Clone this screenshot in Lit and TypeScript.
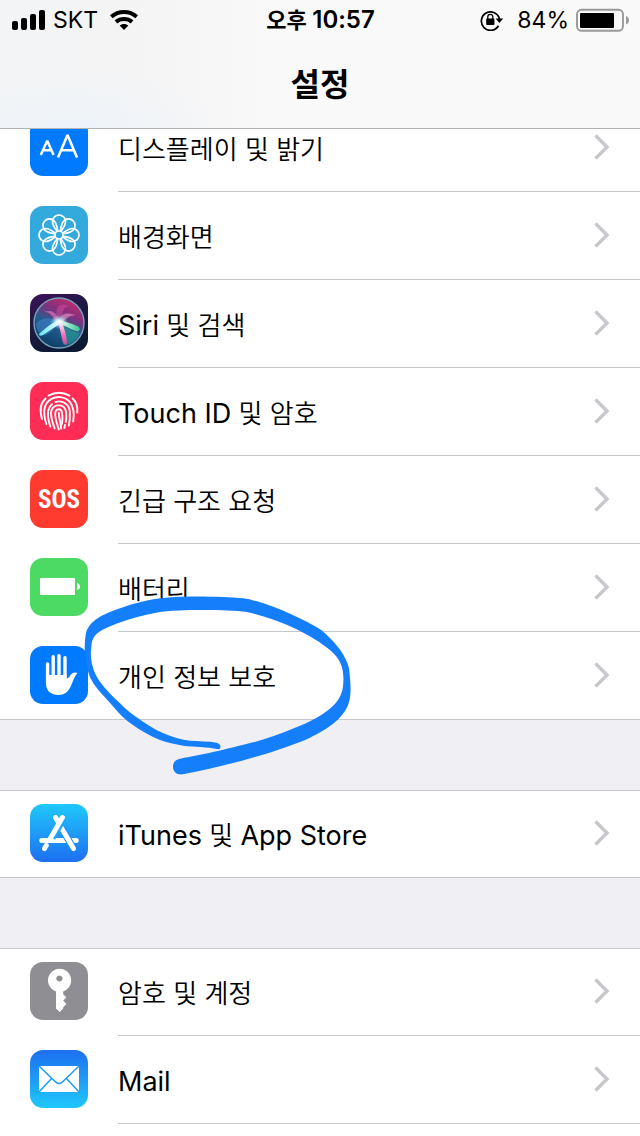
import { LitElement, html, svg, css } from "lit";
import { customElement } from "lit/decorators.js";

const petal = "M27 25 C23 20 22.5 17 22.5 15.5 A6.5 6.5 0 0 1 35.5 15.5 C35.5 17 35 20 31 25";

const icons: Record<string, unknown> = {
  display: svg`
    <rect width="58" height="58" fill="#007aff"/>
    <g fill="none" stroke="#fff" stroke-linejoin="bevel">
      <path stroke-width="2.5" d="M10.8 37 L17.2 22.8 L23.6 37 M13.3 32.2 H21.3"/>
      <path stroke-width="2.5" d="M28 39.5 L37.5 17 L47 39.5 M31.3 32.3 H43.7"/>
    </g>`,
  wallpaper: svg`
    <rect width="58" height="58" fill="#34aadc"/>
    <g fill="none" stroke="#fff" stroke-width="1.7">
      ${[0, 45, 90, 135, 180, 225, 270, 315].map(
        (a) => svg`<path d=${petal} transform="rotate(${a} 29 29)"/>`
      )}
      <circle cx="29" cy="29" r="4"/>
    </g>`,
  siri: svg`
    <defs>
      <linearGradient id="siri-bg" x1="0" y1="0" x2="0.4" y2="1">
        <stop offset="0" stop-color="#3d1159"/><stop offset="0.5" stop-color="#1c1a42"/><stop offset="1" stop-color="#0d1a35"/>
      </linearGradient>
      <linearGradient id="siri-orb" x1="0.75" y1="0" x2="0.3" y2="1">
        <stop offset="0" stop-color="#c52d6e"/><stop offset="0.3" stop-color="#84307e"/><stop offset="0.58" stop-color="#225e91"/><stop offset="1" stop-color="#0b3c63"/>
      </linearGradient>
      <radialGradient id="siri-core"><stop offset="0" stop-color="#fff"/><stop offset="0.4" stop-color="#d5fbff" stop-opacity="0.8"/><stop offset="1" stop-color="#75cfe8" stop-opacity="0"/></radialGradient>
      <linearGradient id="siri-left" x1="0" x2="1"><stop offset="0" stop-color="#5ae7f4"/><stop offset="1" stop-color="#fff"/></linearGradient>
      <linearGradient id="siri-right" x1="0" x2="1"><stop offset="0" stop-color="#fff"/><stop offset="1" stop-color="#2bc98e"/></linearGradient>
      <linearGradient id="siri-down" x1="0" y1="0" x2="0" y2="1"><stop offset="0" stop-color="#fff"/><stop offset="0.6" stop-color="#f171bc"/><stop offset="1" stop-color="#b7539d"/></linearGradient>
    </defs>
    <rect width="58" height="58" fill="url(#siri-bg)"/>
    <circle cx="29" cy="29" r="25" fill="url(#siri-orb)" stroke="#7aa0b8" stroke-width="1.4"/>
    <path fill="#4186cd" opacity="0.55" d="M29 28 C20 21 9 25 6 30 C8 43 16 47 29 28Z"/>
    <path fill="#23af94" opacity="0.5" d="M31 29 C39 36 47 39 50 39 C46 47 40 51 35 51Z"/>
    <path fill="#f070b4" opacity="0.65" d="M30 27 C25 16 20 16 14 18 C20 17 24 24 27 29Z"/>
    <path fill="#f49ac4" opacity="0.6" d="M29 27 C31 19 36 18 46 21 C40 21 35 25 32 29Z"/>
    <path fill="#d64da0" opacity="0.5" d="M27 26 C24 11 31 8 39 12 C33 13 33 18 31 27Z"/>
    <ellipse cx="29" cy="28" rx="9" ry="7" fill="url(#siri-core)"/>
    <path fill="url(#siri-left)" d="M30 26 C22 28 16 34 9 40 C9 42 11 42 13 41 C19 37 25 33 31 29Z"/>
    <path fill="url(#siri-right)" d="M29 26 C36 28 44 30 49 33 C51 36 49 38 46 37 C40 35 34 31 28 29Z"/>
    <path fill="url(#siri-down)" d="M28 27 C30 36 32 44 33 49 C35 52 37 51 37 48 C36 39 34 33 31 27Z"/>`,
  touchid: svg`
    <rect width="58" height="58" fill="#ff2d55"/>
    <g fill="none" stroke="#fff" stroke-width="1.9" stroke-linecap="round">
      <path d="M18.5 13.6 C25 10 33 10 39.5 13.6"/>
      <path d="M15.6 16.5 C10.5 21 9.4 28 12 37"/>
      <path d="M42.6 16.5 C46.4 20 47.8 25 47.3 30.5"/>
      <path d="M16.4 42 C12.4 30 14.4 21 21.4 16.9 C28 13.5 36 15 40 20.2 C43.6 25 44.4 32 43.2 39.5"/>
      <path d="M20.4 44.6 C16.8 34 17 26.5 22 22.2"/>
      <path d="M25.4 20 C33 17.6 39 22.5 39.8 29 C40.2 34.5 39.8 39.5 38.8 43.6"/>
      <path d="M24.6 46.4 C21.2 37 20.2 31.5 21.6 28 C24.4 21.6 33.4 22 35.6 28 C36.8 32 36.4 36.5 35.8 40"/>
      <path d="M35 43 L34.4 46"/>
      <path d="M28.8 47.4 C25.6 38 24.4 33.5 25.4 30 C26.8 26 31.4 26.6 32 30.5 C32.8 36 32.4 40 31.6 42.5"/>
      <path d="M28.8 31 C28.8 35 30.6 40 31.2 46.6"/>
    </g>`,
  sos: svg`
    <rect width="58" height="58" fill="#ff3b30"/>
    <text class="sos" x="29" y="38" text-anchor="middle">SOS</text>`,
  battery: svg`
    <rect width="58" height="58" fill="#4cd964"/>
    <rect x="10" y="20" width="35" height="17" rx="1" fill="#fff"/>
    <path fill="#fff" d="M47 25 C51 26 51 31 47 32Z"/>`,
  privacy: svg`
    <rect width="58" height="58" fill="#007aff"/>
    <g stroke="#fff" stroke-width="3.4" stroke-linecap="round">
      <path d="M17.6 18 V32 M23.2 10.8 V31 M29 9.6 V31 M35 11.6 V31"/>
    </g>
    <path fill="#fff" d="M15.9 29 H36.7 V32.5 Q38.5 32.5 39.5 30.5 C41.5 27 44.5 25.5 47.5 27 C44.5 30 43.5 34 41.8 38 C39 45 35.5 49 28.5 49 C20 49 15.9 44 15.9 37Z"/>`,
  store: svg`
    <defs><linearGradient id="store-bg" x1="0" y1="0" x2="0" y2="1"><stop offset="0" stop-color="#1fc8fb"/><stop offset="1" stop-color="#1e6ff1"/></linearGradient></defs>
    <rect width="58" height="58" fill="url(#store-bg)"/>
    <g fill="none" stroke="#fff" stroke-width="5" stroke-linecap="round">
      <path d="M16.3 41.5 L14.5 44.5"/>
      <path d="M11.8 36.5 H46.2"/>
      <path d="M31 23 L42.6 43" stroke="#1f8ff6" stroke-width="7" stroke-linecap="butt"/>
      <path d="M31.8 24.4 L43.5 44.6"/>
      <path d="M33.3 14.5 L22 34" stroke="#1fa6f8" stroke-width="7" stroke-linecap="butt"/>
      <path d="M25.6 13.5 L28.6 18.7"/>
      <path d="M32.4 13.5 L19.5 36"/>
    </g>`,
  key: svg`
    <rect width="58" height="58" fill="#8e8e93"/>
    <path fill="#fff" fill-rule="evenodd" d="M26 29.4 A11.6 11.6 0 1 1 33.2 29.4 V32.2 L36.4 35.5 L33.2 38.6 L36.4 42 L33.2 45.2 V46.5 L29.8 50 L26 46.5Z M29.4 13.4 a3.1 3.1 0 1 0 .01 0Z"/>`,
  mail: svg`
    <defs><linearGradient id="mail-bg" x1="0" y1="0" x2="0" y2="1"><stop offset="0" stop-color="#1e6ff1"/><stop offset="1" stop-color="#1fc8fb"/></linearGradient></defs>
    <rect width="58" height="58" fill="url(#mail-bg)"/>
    <rect x="9" y="16" width="40" height="26" rx="0.8" fill="#fff"/>
    <path fill="none" stroke="#1f9cf6" stroke-width="1.5" d="M9 16 L24.5 31 Q29 36 33.5 31 L49 16 M9 42 L21.5 28.6 M49 42 L36.5 28.6"/>`,
};

interface Item {
  icon: string;
  label: string;
  marked?: boolean;
}

const groups: Item[][] = [
  [
    { icon: "display", label: "디스플레이 및 밝기" },
    { icon: "wallpaper", label: "배경화면" },
    { icon: "siri", label: "Siri 및 검색" },
    { icon: "touchid", label: "Touch ID 및 암호" },
    { icon: "sos", label: "긴급 구조 요청" },
    { icon: "battery", label: "배터리" },
    { icon: "privacy", label: "개인 정보 보호", marked: true },
  ],
  [{ icon: "store", label: "iTunes 및 App Store" }],
  [
    { icon: "key", label: "암호 및 계정" },
    { icon: "mail", label: "Mail" },
  ],
];

@customElement("settings-row")
class SettingsRow extends LitElement {
  static properties = { icon: {}, label: {}, marked: { type: Boolean } };
  declare icon: string;
  declare label: string;
  declare marked: boolean;

  static styles = css`
    :host { display: block; position: relative; }
    .row {
      display: flex; align-items: stretch; gap: 30px; height: 88px;
      padding-left: 30px; color: #000; text-decoration: none;
    }
    .icon { width: 58px; height: 58px; margin-top: 14px; border-radius: 13px; flex: none; }
    .sos { font: 700 25px "Liberation Sans Narrow", "Roboto Condensed", "Liberation Sans", sans-serif; fill: #fff; }
    .body {
      flex: 1; display: flex; align-items: center; justify-content: space-between;
      padding-right: 30px; border-bottom: 1px solid var(--row-line, #c8c7cc);
    }
    .label { font: 350 26px/40px Inter, "Noto Sans CJK KR", sans-serif; white-space: nowrap; padding-top: 4px; }
    .latin { font-size: 27px; font-weight: 400; }
    .chevron { width: 18px; height: 28px; flex: none; margin-bottom: 1px; }
    .mark { position: absolute; left: 70px; top: -52px; width: 300px; height: 210px; pointer-events: none; }
  `;

  render() {
    const parts = this.label.split(/([A-Za-z]+(?: [A-Za-z]+)*)/).filter(Boolean);
    return html`
      <a class="row" href="#${this.icon}">
        <svg class="icon" viewBox="0 0 58 58" aria-hidden="true">${icons[this.icon]}</svg>
        <span class="body">
          <span class="label">${parts.map((p) => (/[A-Za-z]/.test(p) ? html`<span class="latin">${p}</span>` : p))}</span>
          <svg class="chevron" viewBox="0 0 18 28" aria-hidden="true">
            <path d="M3.5 2.5 L15 14 L3.5 25.5" fill="none" stroke="#c7c7cc" stroke-width="3.4"/>
          </svg>
        </span>
      </a>
      ${this.marked
        ? html`<svg class="mark" viewBox="0 0 900 630" aria-hidden="true">
            <path fill="#147efb" d="M445 508 C410 499 375 502 340 497 C315 493 290 488 270 480 C240 468 212 452 190 436 C168 421 148 402 130 380 C105 352 85 332 70 310 C57 290 50 265 48 240 C43 215 43 190 47 165 C53 125 95 105 135 90 C200 65 260 52 330 50 C400 48 470 50 520 55 C590 65 720 125 760 155 C800 190 830 230 837 265 C842 310 845 340 836 370 C822 415 770 450 720 473 C650 505 500 552 338 583 C318 585 308 572 309 558 C310 545 318 538 330 536 C400 525 500 500 550 487 C640 460 700 435 740 413 C790 385 815 355 819 320 C824 270 815 240 780 210 C720 160 620 115 530 96 C470 88 330 88 270 96 C220 104 150 125 110 143 C75 158 65 175 64 200 C62 220 62 230 64 240 C68 268 78 288 90 305 C108 330 130 350 150 370 C168 388 182 400 200 412 C225 430 252 448 280 460 C310 472 335 480 360 482 C385 484 415 483 440 488 C455 491 454 508 445 508Z"/>
          </svg>`
        : null}
    `;
  }
}

@customElement("app-root")
class AppRoot extends LitElement {
  static styles = css`
    :host {
      display: flex; flex-direction: column; height: 100vh; overflow: hidden;
      background: #efeff4; font-family: Inter, "Noto Sans CJK KR", sans-serif; color: #000;
    }
    .top {
      flex: none; position: relative; z-index: 1; border-bottom: 1px solid #b2b2b2;
      background:
        radial-gradient(ellipse 150px 60px at 70px 128px, #edf3f9 0%, #edf3f900 100%),
        linear-gradient(90deg, #f3f4f5 0, #f4f4f5 120px, #f9f9f9 280px);
    }
    .status {
      display: grid; grid-template-columns: 1fr auto 1fr; align-items: center;
      height: 40px; padding: 0 11px 0 12px; font-size: 23px; line-height: 40px;
    }
    .side { display: flex; align-items: center; gap: 7px; }
    .end { justify-content: flex-end; }
    .time { font-weight: 600; font-size: 22px; }
    .digits { font-size: 24px; }
    .signal { width: 34px; height: 20px; }
    .wifi { width: 28px; height: 20px; margin-left: 5px; }
    .lock { width: 24px; height: 22px; margin-right: 6px; }
    .cell { width: 53px; height: 24px; }
    .title { margin: 0; height: 88px; font-size: 32px; line-height: 90px; font-weight: 700; text-align: center; }
    .list { flex: 1; display: flex; flex-direction: column; gap: 70px; margin-top: -25px; }
    .group { flex: none; background: #fff; }
    .group.ruled { box-shadow: inset 0 1px #c8c7cc; }
    .group.last { flex: 1; }
    .full { box-shadow: inset 0 -1px #c8c7cc; --row-line: transparent; }
  `;

  render() {
    return html`
      <header class="top">
        <div class="status">
          <div class="side">
            <svg class="signal" viewBox="0 0 34 20" aria-hidden="true">
              <rect x="0" y="11" width="6" height="9" rx="2"/><rect x="9" y="8" width="6" height="12" rx="2"/>
              <rect x="18" y="4" width="6" height="16" rx="2"/><rect x="27" y="0" width="6" height="20" rx="2"/>
            </svg>
            <span>SKT</span>
            <svg class="wifi" viewBox="0 0 28 20" aria-hidden="true">
              <g fill="none" stroke="#000" stroke-width="4">
                <path d="M1.3 6.8 C8.5 0.4 19.5 0.4 26.7 6.8"/>
                <path d="M5.9 11.9 C10.5 8 17.5 8 22.1 11.9"/>
              </g>
              <path d="M14 20 L9.6 15.6 C12 13.3 16 13.3 18.4 15.6Z"/>
            </svg>
          </div>
          <span class="time">오후 <span class="digits">10:57</span></span>
          <div class="side end">
            <svg class="lock" viewBox="0 0 24 22" aria-hidden="true">
              <path fill="none" stroke="#000" stroke-width="1.7" d="M18.5 16.8 A9.2 9.2 0 1 1 19.5 10"/>
              <path d="M15.6 9.6 H23.2 L19.4 14Z"/>
              <rect x="6.2" y="9.6" width="8.2" height="6.4" rx="0.8"/>
              <path fill="none" stroke="#000" stroke-width="1.3" d="M7.8 10 V7.8 a2.5 2.5 0 0 1 5 0 V10"/>
            </svg>
            <span>84%</span>
            <svg class="cell" viewBox="0 0 53 24" aria-hidden="true">
              <rect x="1" y="1.8" width="46" height="21" rx="4.5" fill="none" stroke="#999" stroke-width="1.9"/>
              <rect x="4" y="5" width="34" height="15" rx="1"/>
              <path fill="#999" d="M50 8 C54 9.5 54 15 50 16.5Z"/>
            </svg>
          </div>
        </div>
        <h1 class="title">설정</h1>
      </header>
      <main class="list">
        ${groups.map(
          (items, g) => html`<section class="group ${g > 0 ? "ruled" : ""} ${g === groups.length - 1 ? "last" : ""}">
            ${items.map(
              (it, i) => html`<settings-row
                class=${i === items.length - 1 && g < groups.length - 1 ? "full" : ""}
                .icon=${it.icon} .label=${it.label} .marked=${!!it.marked}></settings-row>`
            )}
          </section>`
        )}
      </main>
    `;
  }
}
